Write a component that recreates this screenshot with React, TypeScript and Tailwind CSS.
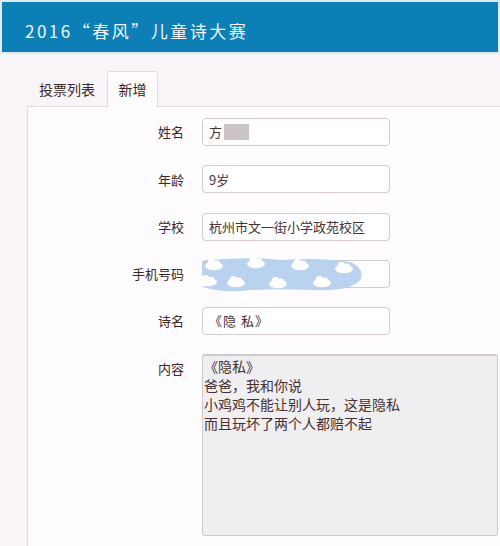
import React from 'react';

const font = { fontFamily: '"Noto Sans CJK SC", "Noto Sans", sans-serif' };

function PhoneBlur() {
  // cloud-pattern mosaic that hides the phone number
  const clouds = [
    [14, 9], [56, 7], [100, 9], [144, 12], [36, 26], [78, 27], [122, 26], [8, 25],
  ];
  return (
    <svg width="164" height="35" viewBox="0 0 164 35" className="block">
      <path
        d="M2 4 Q40 -1 80 3 Q120 0 150 5 Q164 10 161 22 Q152 35 110 33 Q70 31 40 34 Q4 35 2 26 Z"
        fill="#b8d2ef"
      />
      {clouds.map(([x, y], i) => (
        <g key={i} fill="#ffffff">
          <ellipse cx={x} cy={y} rx="9" ry="4.2" />
          <circle cx={x - 2.5} cy={y - 3} r="4" />
          <circle cx={x + 3} cy={y - 2.2} r="3.2" />
        </g>
      ))}
    </svg>
  );
}

function Field({ label, children, top }: { label: string; children: React.ReactNode; top?: boolean }) {
  return (
    <div className={`flex ${top ? 'items-start' : 'items-center'} gap-[18px]`}>
      <div className={`w-[156px] shrink-0 text-right text-[13px] text-[#3a2828] ${top ? 'pt-[5px]' : ''}`}>
        {label}
      </div>
      {children}
    </div>
  );
}

const inputCls =
  'h-[28px] w-[188px] rounded-[4px] border border-[#d6cacd] bg-white px-[6px] flex items-center text-[13px] text-[#463232]';

export default function App() {
  return (
    <div className="w-[500px] h-[546px] overflow-hidden bg-[#f8f4f8]" style={font}>
      <header className="h-[54px] bg-[#0c7fb6] border-2 border-[#e2ecf0] flex items-center pl-[23px] pt-[7px]">
        <h1 className="text-[17px] tracking-[2.5px] text-[#eef6fa] font-normal">2016“春风”儿童诗大赛</h1>
      </header>

      <div className="pt-[18px] pl-[27px]">
        <div className="flex items-end h-[35px] border-b border-[#e3dade]">
          <div className="h-[34px] w-[80px] flex items-center justify-center text-[14px] text-[#3a2828]">投票列表</div>
          <div className="h-[36px] w-[51px] -mb-px flex items-center justify-center bg-[#fefcfe] border border-b-0 border-[#e3dade] rounded-t-[3px] text-[14px] text-[#3a2828]">
            新增
          </div>
        </div>

        <div className="h-[460px] bg-[#fefcfe] border-l border-[#e3dade] pt-[11px] flex flex-col gap-[19.3px]">
          <Field label="姓名">
            <div className={inputCls}>
              方<span className="ml-[2px] inline-block w-[25px] h-[16px] bg-[#cbc3c7]" />
            </div>
          </Field>
          <Field label="年龄">
            <div className={inputCls}>9岁</div>
          </Field>
          <Field label="学校">
            <div className={inputCls}>杭州市文一街小学政苑校区</div>
          </Field>
          <Field label="手机号码">
            <div className="relative">
              <div className={inputCls} />
              <div className="absolute -left-[2px] -top-[3px]">
                <PhoneBlur />
              </div>
            </div>
          </Field>
          <Field label="诗名">
            <div className={`${inputCls} tracking-[1px]`}>《隐 私》</div>
          </Field>
          <Field label="内容" top>
            <div className="h-[182px] w-[296px] rounded-[3px] border border-[#d3c7ca] border-t-2 bg-[#efeef1] pl-[1px] pt-[1px] text-[14px] leading-[19px] text-[#46302f] whitespace-pre-line">
              {'《隐私》\n爸爸，我和你说\n小鸡鸡不能让别人玩，这是隐私\n而且玩坏了两个人都赔不起'}
            </div>
          </Field>
        </div>
      </div>
    </div>
  );
}
